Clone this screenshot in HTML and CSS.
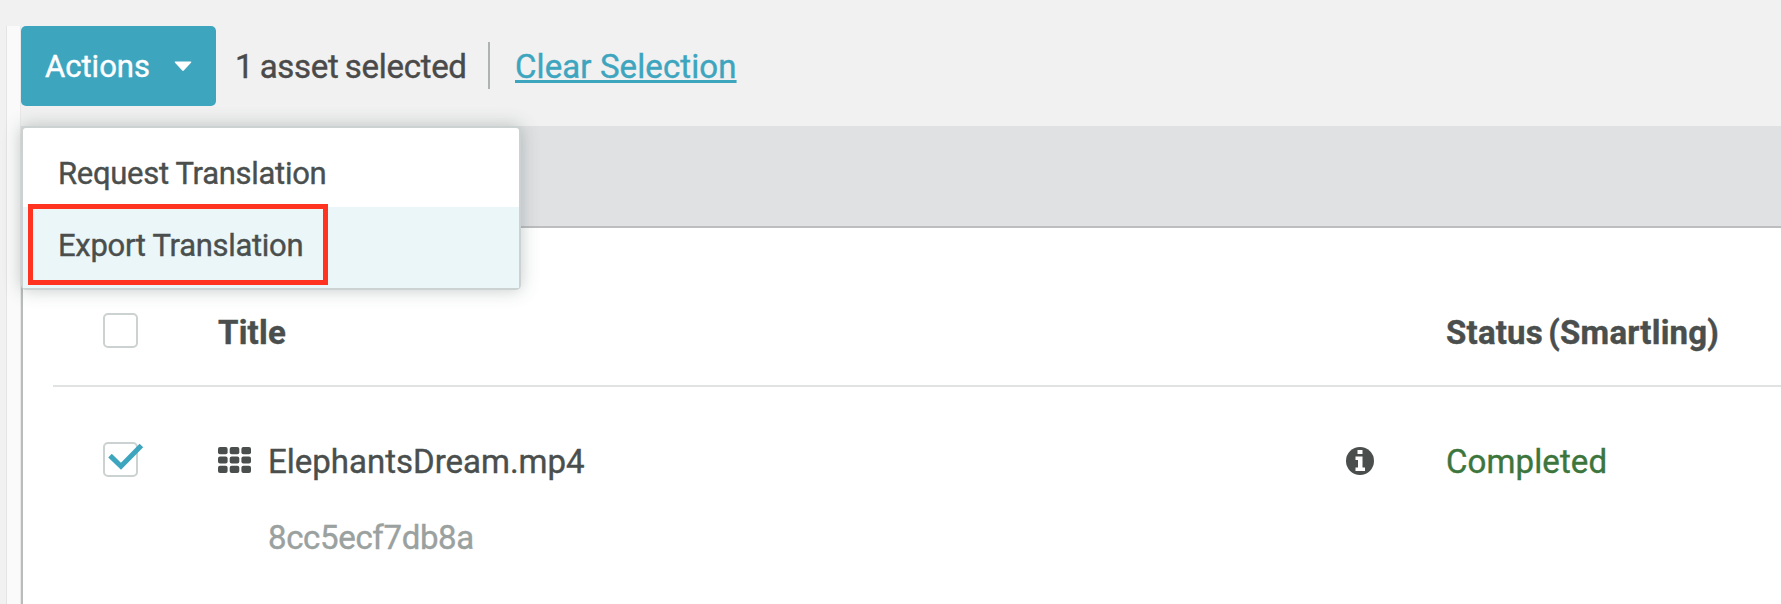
FILE: index.html
```html
<!DOCTYPE html>
<html lang="en">
<head>
    <meta charset="UTF-8">
    <title>Assets</title>
    <meta name="viewport" content="width=device-width, initial-scale=1.0">
    <link rel="stylesheet" href="styles.css">
</head>
<body>
    <div class="page">
        <div class="gutter"></div>
        <div class="main">
            <div class="toolbar">
                <div class="actions">
                    <button type="button" class="actions-btn">
                        <span>Actions</span>
                        <svg class="caret" width="18" height="11" viewBox="0 0 18 11"><path d="M1.5 0.5h15q1.5 0 .5 1.3L10 9.3q-1 1.2-2 0L1 1.8Q0 .5 1.5 .5z" fill="#fff"/></svg>
                    </button>
                    <div class="menu">
                        <a href="#" class="request">Request Translation</a>
                        <a href="#" class="export active">Export Translation</a>
                        <div class="highlight"></div>
                    </div>
                </div>
                <span class="selected">1 asset selected</span>
                <span class="divider"></span>
                <a href="#" class="clear">Clear Selection</a>
            </div>
            <div class="panel">
                <div class="panel-bar"></div>
                <div class="table">
                    <div class="row head">
                        <span class="checkbox"></span>
                        <span class="title">Title</span>
                        <span class="status">Status (Smartling)</span>
                    </div>
                    <div class="row">
                        <span class="checkbox">
                            <svg class="check" width="36" height="28" viewBox="0 0 36 28"><path d="M2 12.6L13 23.2L33.4 2.6" fill="none" stroke="#3ea5bf" stroke-width="5"/></svg>
                        </span>
                        <span class="title">
                            <svg class="grid-icon" width="33" height="26" viewBox="0 0 33 26" fill="#4a4f4e">
                                <rect x="0" y="0" width="9.6" height="7.2" rx="2"/>
                                <rect x="11.7" y="0" width="9.6" height="7.2" rx="2"/>
                                <rect x="23.4" y="0" width="9.6" height="7.2" rx="2"/>
                                <rect x="0" y="9.4" width="9.6" height="7.2" rx="2"/>
                                <rect x="11.7" y="9.4" width="9.6" height="7.2" rx="2"/>
                                <rect x="23.4" y="9.4" width="9.6" height="7.2" rx="2"/>
                                <rect x="0" y="18.8" width="9.6" height="7.2" rx="2"/>
                                <rect x="11.7" y="18.8" width="9.6" height="7.2" rx="2"/>
                                <rect x="23.4" y="18.8" width="9.6" height="7.2" rx="2"/>
                            </svg>
                            <span class="name">ElephantsDream.mp4</span>
                            <svg class="info" width="28" height="28" viewBox="0 0 28 28">
                                <circle cx="14" cy="14" r="14" fill="#4a4f4e"/>
                                <path d="M11.5 3h5v4h-5zM9.5 9.5h7v11H19V24H9.5v-3.500H12V13H9.500z" fill="#fff"/>
                            </svg>
                        </span>
                        <span class="status done">Completed</span>
                    </div>
                    <div class="asset-id">8cc5ecf7db8a</div>
                </div>
            </div>
        </div>
    </div>
</body>
</html>
```
FILE: styles.css
```css
* { box-sizing: border-box; }
body {
    margin: 0;
    font-family: Roboto, Arial, sans-serif;
    font-size: 33px;
    color: #4a4f4e;
    background: #f1f1f1;
    overflow: hidden;
    -webkit-text-stroke: 0.4px;
}
.page {
    display: flex;
    height: 604px;
    padding: 26px 0 0 6px;
}
.gutter {
    width: 15px;
    background: #fafafa;
    border-left: 1px solid #e4e4e4;
    border-right: 1px solid #e9e9e9;
}
.main {
    flex: 1;
    min-width: 0;
    display: flex;
    flex-direction: column;
}
.toolbar {
    display: flex;
    align-items: center;
    height: 80px;
    margin-bottom: 20px;
    white-space: nowrap;
}
.actions {
    position: relative;
    width: 195px;
}
.actions-btn {
    display: flex;
    align-items: center;
    justify-content: space-between;
    width: 195px;
    height: 80px;
    padding: 0 24px;
    border: none;
    border-radius: 5px;
    background: #3ea5bf;
    color: #fff;
    font: 31px Roboto, Arial, sans-serif;
    -webkit-text-stroke: 0.4px;
    cursor: pointer;
}
.menu {
    position: absolute;
    top: 100px;
    left: 0;
    z-index: 2;
    width: 500px;
    height: 164px;
    padding-top: 13px;
    background: #fff;
    border: 2px solid #ccd2d1;
    border-radius: 5px;
    box-shadow: 0 0 18px rgba(60,80,75,0.3);
}
.menu a {
    display: block;
    height: 66px;
    padding-left: 35px;
    color: #4a4f4e;
    font-size: 31px;
    line-height: 66px;
    letter-spacing: -0.3px;
    text-decoration: none;
}
.menu a.active {
    height: 81px;
    line-height: 78px;
    background: #ebf6f9;
}
.highlight {
    position: absolute;
    top: 76px;
    left: 5px;
    width: 300px;
    height: 81px;
    border: 5px solid #ff3320;
}
.selected {
    width: 232px;
    margin-left: 19px;
    color: #4a4a4a;
    letter-spacing: -0.3px;
    word-spacing: -1.5px;
}
.divider {
    width: 2px;
    height: 47px;
    margin: 0 0 1px 21px;
    background: #acb3b1;
}
.clear {
    margin-left: 25px;
    color: #3ea5bf;
    letter-spacing: 0.1px;
    text-decoration-thickness: 3px;
    text-underline-offset: 2px;
    text-decoration-skip-ink: none;
}
.panel {
    flex: 1;
    background: #fff;
    border-left: 2px solid #b8bdbc;
}
.panel-bar {
    height: 102px;
    margin-left: -2px;
    background: #e0e1e3;
    border-bottom: 2px solid #bdbdbf;
}
.table {
    padding: 48px 0 0 30px;
}
.row {
    display: flex;
    align-items: center;
    height: 147px;
    padding-left: 50px;
    white-space: nowrap;
}
.row.head {
    height: 111px;
    padding-top: 2px;
    border-bottom: 2px solid #e1e3e3;
    font-weight: bold;
    letter-spacing: 0.2px;
    word-spacing: -3px;
}
.row.head .title,
.row.head .status,
.name,
.status.done {
    padding-top: 2px;
}
.checkbox {
    position: relative;
    width: 35px;
    height: 35px;
    margin-top: -2px;
    border: 2px solid #ccd2d1;
    border-radius: 5px;
    background: #fff;
}
.check {
    position: absolute;
    top: -1px;
    left: 3px;
}
.title {
    display: flex;
    align-items: center;
    width: 1228px;
    margin-left: 80px;
}
.grid-icon {
    margin-bottom: 1px;
}
.name {
    margin-left: 17px;
}
.info {
    margin-left: auto;
    margin-right: 72px;
}
.status.done {
    color: #3c763d;
    letter-spacing: 0.1px;
}
.asset-id {
    margin-top: -16px;
    padding-left: 215px;
    line-height: 40px;
    letter-spacing: -0.35px;
    color: #9aa19f;
}
```
